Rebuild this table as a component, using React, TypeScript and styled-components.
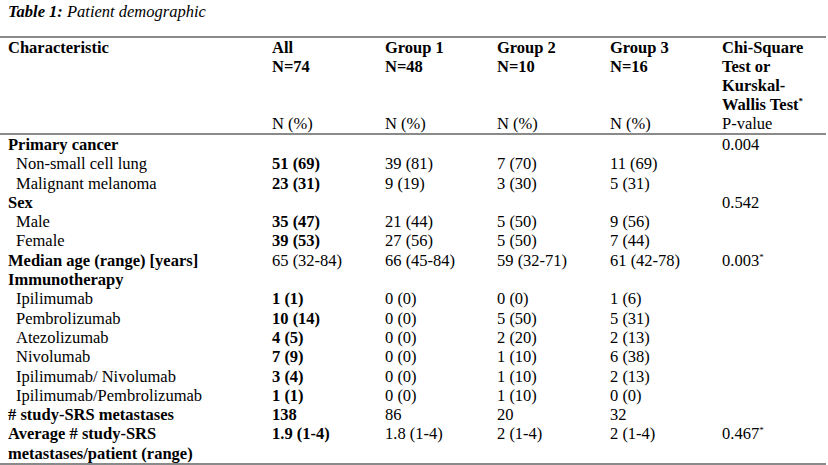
import React from "react";
import styled, { createGlobalStyle } from "styled-components";

const serif = `"Liberation Serif", "Times New Roman", "DejaVu Serif", serif`;

const GlobalStyle = createGlobalStyle`
  html, body {
    margin: 0;
    padding: 0;
    background: #ffffff;
  }
  body {
    font-family: ${serif};
    color: #000000;
  }
`;

const Page = styled.div`
  width: 828px;
  height: 465px;
  padding-top: 2px;
  box-sizing: border-box;
  overflow: hidden;
  font-family: ${serif};
`;

const Caption = styled.div`
  font-family: ${serif};
  font-size: 16.5px;
  line-height: 19px;
  font-style: italic;
  padding-left: 8px;
  margin-bottom: 15px;
`;

const CaptionLabel = styled.span`
  font-weight: bold;
`;

const Table = styled.table`
  width: 826px;
  border-collapse: collapse;
  table-layout: fixed;
  font-family: ${serif};
  font-size: 16.5px;
  color: #000000;
  border-top: 2px solid #8a8a8a;
  border-bottom: 2px solid #8a8a8a;
`;

const HeadRow = styled.tr<{ $last?: boolean }>`
  border-bottom: ${(p) => (p.$last ? "2px solid #8a8a8a" : "none")};
`;

const Th = styled.th`
  font-family: ${serif};
  text-align: left;
  vertical-align: top;
  font-weight: bold;
  line-height: 19px;
  padding: 0 4px 0 7px;
`;

const SubTh = styled.th`
  font-family: ${serif};
  text-align: left;
  vertical-align: top;
  font-weight: normal;
  line-height: 19px;
  padding: 0 4px 0 7px;
`;

const LabelCell = styled.td<{ $indent?: boolean; $bold?: boolean }>`
  font-family: ${serif};
  padding: 0 4px 0 ${(p) => (p.$indent ? "16px" : "8px")};
  font-weight: ${(p) => (p.$bold ? "bold" : "normal")};
  line-height: 19.3px;
  vertical-align: top;
  white-space: nowrap;
`;

const ValueCell = styled.td<{ $bold?: boolean }>`
  font-family: ${serif};
  padding: 0 4px 0 7px;
  font-weight: ${(p) => (p.$bold ? "bold" : "normal")};
  line-height: 19.3px;
  vertical-align: top;
  white-space: nowrap;
`;

const Star = styled.sup`
  font-size: 9px;
  line-height: 0;
  vertical-align: 6px;
`;

type Row = {
  label: React.ReactNode;
  indent?: boolean;
  boldLabel?: boolean;
  all?: string;
  boldAll?: boolean;
  g1?: string;
  g2?: string;
  g3?: string;
  p?: React.ReactNode;
};

const rows: Row[] = [
  { label: "Primary cancer", boldLabel: true, p: "0.004" },
  { label: "Non-small cell lung", indent: true, all: "51 (69)", boldAll: true, g1: "39 (81)", g2: "7 (70)", g3: "11 (69)" },
  { label: "Malignant melanoma", indent: true, all: "23 (31)", boldAll: true, g1: "9 (19)", g2: "3 (30)", g3: "5 (31)" },
  { label: "Sex", boldLabel: true, p: "0.542" },
  { label: "Male", indent: true, all: "35 (47)", boldAll: true, g1: "21 (44)", g2: "5 (50)", g3: "9 (56)" },
  { label: "Female", indent: true, all: "39 (53)", boldAll: true, g1: "27 (56)", g2: "5 (50)", g3: "7 (44)" },
  {
    label: "Median age (range) [years]",
    boldLabel: true,
    all: "65 (32-84)",
    g1: "66 (45-84)",
    g2: "59 (32-71)",
    g3: "61 (42-78)",
    p: (
      <>
        0.003<Star>*</Star>
      </>
    ),
  },
  { label: "Immunotherapy", boldLabel: true },
  { label: "Ipilimumab", indent: true, all: "1 (1)", boldAll: true, g1: "0 (0)", g2: "0 (0)", g3: "1 (6)" },
  { label: "Pembrolizumab", indent: true, all: "10 (14)", boldAll: true, g1: "0 (0)", g2: "5 (50)", g3: "5 (31)" },
  { label: "Atezolizumab", indent: true, all: "4 (5)", boldAll: true, g1: "0 (0)", g2: "2 (20)", g3: "2 (13)" },
  { label: "Nivolumab", indent: true, all: "7 (9)", boldAll: true, g1: "0 (0)", g2: "1 (10)", g3: "6 (38)" },
  { label: "Ipilimumab/ Nivolumab", indent: true, all: "3 (4)", boldAll: true, g1: "0 (0)", g2: "1 (10)", g3: "2 (13)" },
  { label: "Ipilimumab/Pembrolizumab", indent: true, all: "1 (1)", boldAll: true, g1: "0 (0)", g2: "1 (10)", g3: "0 (0)" },
  { label: "# study-SRS metastases", boldLabel: true, all: "138", boldAll: true, g1: "86", g2: "20", g3: "32" },
  {
    label: (
      <>
        Average # study-SRS
        <br />
        metastases/patient (range)
      </>
    ),
    boldLabel: true,
    all: "1.9 (1-4)",
    boldAll: true,
    g1: "1.8 (1-4)",
    g2: "2 (1-4)",
    g3: "2 (1-4)",
    p: (
      <>
        0.467<Star>*</Star>
      </>
    ),
  },
];

const groups = [
  { name: "All", n: "N=74" },
  { name: "Group 1", n: "N=48" },
  { name: "Group 2", n: "N=10" },
  { name: "Group 3", n: "N=16" },
];

export default function App() {
  return (
    <Page>
      <GlobalStyle />
      <Caption>
        <CaptionLabel>Table 1:</CaptionLabel> Patient demographic
      </Caption>
      <Table>
        <colgroup>
          <col style={{ width: 265 }} />
          <col style={{ width: 113 }} />
          <col style={{ width: 112 }} />
          <col style={{ width: 113 }} />
          <col style={{ width: 112 }} />
          <col style={{ width: 111 }} />
        </colgroup>
        <thead>
          <HeadRow>
            <Th rowSpan={2} style={{ paddingLeft: 8 }}>
              Characteristic
            </Th>
            {groups.map((g) => (
              <Th key={g.name}>
                {g.name}
                <br />
                {g.n}
              </Th>
            ))}
            <Th>
              Chi-Square
              <br />
              Test or
              <br />
              Kurskal-
              <br />
              Wallis Test<Star>*</Star>
            </Th>
          </HeadRow>
          <HeadRow $last>
            <SubTh>N (%)</SubTh>
            <SubTh>N (%)</SubTh>
            <SubTh>N (%)</SubTh>
            <SubTh>N (%)</SubTh>
            <SubTh>P-value</SubTh>
          </HeadRow>
        </thead>
        <tbody>
          {rows.map((r, i) => (
            <tr key={i}>
              <LabelCell $indent={r.indent} $bold={r.boldLabel}>
                {r.label}
              </LabelCell>
              <ValueCell $bold={r.boldAll}>{r.all}</ValueCell>
              <ValueCell>{r.g1}</ValueCell>
              <ValueCell>{r.g2}</ValueCell>
              <ValueCell>{r.g3}</ValueCell>
              <ValueCell>{r.p}</ValueCell>
            </tr>
          ))}
        </tbody>
      </Table>
    </Page>
  );
}
